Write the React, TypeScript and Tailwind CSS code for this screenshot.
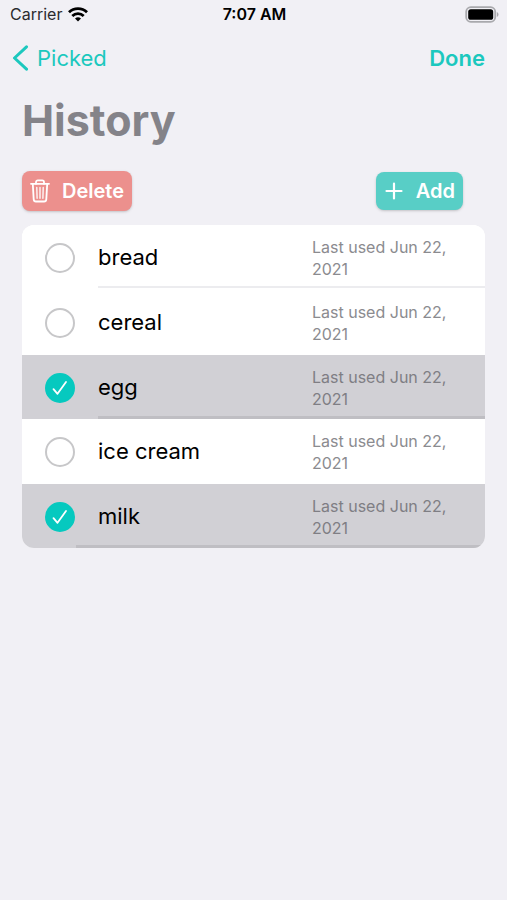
/**
 * @component App
 * @description History screen - previously used items that can be deleted or added again
 */
import React, { useState } from 'react';

const WifiIcon: React.FC = () => (
  <svg width="20" height="15" viewBox="0 0 20 15" fill="none" stroke="#000" strokeWidth="2.8" aria-hidden="true">
    <path d="M1 5.300a12.800 12.800 0 0 1 18 0" />
    <path d="M4.300 9a8.200 8.200 0 0 1 11.400 0" />
    <path d="M10 14.600l-3-3a4.300 4.300 0 0 1 6 0z" fill="#000" stroke="none" />
  </svg>
);

const BatteryIcon: React.FC = () => (
  <svg width="34" height="17" viewBox="0 0 34 17" aria-hidden="true">
    <rect x="1.2" y="1.2" width="29" height="14.6" rx="4.6" fill="none" stroke="#a9a9ad" strokeWidth="1.8" />
    <rect x="3.2" y="3.2" width="25" height="10.6" rx="2.6" fill="#000" />
    <path d="M31.800 6v5c1-.4 1.700-1.400 1.700-2.500S32.800 6.400 31.800 6z" fill="#a9a9ad" />
  </svg>
);

const TrashIcon: React.FC = () => (
  <svg width="20" height="24" viewBox="0 0 20 24" fill="none" stroke="#fff" strokeLinecap="round" strokeLinejoin="round" aria-hidden="true">
    <path d="M1 4.800h18" strokeWidth="1.800" />
    <path d="M6 4.800V3.200C6 2.100 6.800 1.400 7.800 1.400h4.400c1 0 1.800.7 1.800 1.800v1.600" strokeWidth="1.800" />
    <path d="M2.800 5l.9 15.400c.1 1.300.9 2.100 2.200 2.100h8.200c1.300 0 2.100-.8 2.200-2.100L17.200 5" strokeWidth="1.800" />
    <path d="M6.800 8.500l.3 10.800M10 8.500v10.800M13.200 8.500l-.3 10.800" strokeWidth="1.300" />
  </svg>
);

const App: React.FC = () => {
  const [items, setItems] = useState([
    { id: 1, name: 'bread', lastUsed: 'Jun 22, 2021', picked: false },
    { id: 2, name: 'cereal', lastUsed: 'Jun 22, 2021', picked: false },
    { id: 3, name: 'egg', lastUsed: 'Jun 22, 2021', picked: true },
    { id: 4, name: 'ice cream', lastUsed: 'Jun 22, 2021', picked: false },
    { id: 5, name: 'milk', lastUsed: 'Jun 22, 2021', picked: true },
  ]);

  const toggle = (id: number) =>
    setItems(items.map((item) => (item.id === id ? { ...item, picked: !item.picked } : item)));

  // The separator is hidden when the row below is highlighted
  const lineClass = (index: number) => {
    if (items[index].picked) return 'h-[3px] bg-[#bfbec3]';
    return items[index + 1]?.picked ? 'h-[2px] bg-transparent' : 'h-[2px] bg-[#ececef]';
  };

  return (
    <div className="min-h-screen bg-[#f1f0f5] font-['Inter','Liberation_Sans',sans-serif] text-black">
      {/* Status Bar */}
      <div className="grid grid-cols-3 items-center h-8 pl-[10px] pr-2 pb-1 text-base">
        <div className="flex items-center gap-[6px] text-[#2b2b2e]">
          Carrier
          <WifiIcon />
        </div>
        <div className="text-center font-semibold">7:07 AM</div>
        <div className="flex justify-end">
          <BatteryIcon />
        </div>
      </div>

      {/* Navigation */}
      <nav className="flex items-center justify-between h-[52px] pl-3 pr-[22px] text-[22px] text-[#1cc8be]">
        <a href="#picked" className="flex items-center gap-2">
          <svg width="17" height="26" viewBox="0 0 17 26" fill="none" stroke="currentColor" strokeWidth="3" strokeLinecap="round" strokeLinejoin="round" aria-hidden="true">
            <path d="M14.500 1.800L2.500 13l12 11.200" />
          </svg>
          Picked
        </a>
        <button className="font-semibold">Done</button>
      </nav>

      <main className="px-[22px]">
        <h1 className="pt-2 text-[43px] leading-14 font-bold text-[#848389]">History</h1>

        {/* Actions */}
        <div className="flex items-center justify-between pt-[23px] pr-[22px] text-xl font-semibold text-white">
          <button className="flex items-center gap-3 h-10 px-2 rounded-lg bg-[#ec908d] shadow-sm shadow-black/15">
            <TrashIcon />
            Delete
          </button>
          <button className="flex items-center gap-3 h-[38px] px-2 rounded-lg bg-[#58cec6] shadow-sm shadow-black/15">
            <svg width="20" height="20" viewBox="0 0 20 20" stroke="#fff" strokeWidth="2.200" strokeLinecap="round" aria-hidden="true">
              <path d="M10 2.500v15M2.500 10h15" />
            </svg>
            Add
          </button>
        </div>

        {/* Item List */}
        <ul className="mt-[14px] rounded-xl overflow-hidden bg-white">
          {items.map((item, index) => (
            <li key={item.id} className={item.picked ? 'bg-[#d1d0d5]' : 'bg-white pb-[2px]'}>
              <label className="grid grid-cols-[76px_1fr_173px] items-center min-h-[61px] pt-1">
                <span className="grid place-items-center w-[30px] ml-[23px]">
                  <input
                    type="checkbox"
                    checked={item.picked}
                    onChange={() => toggle(item.id)}
                    className="appearance-none col-start-1 row-start-1 size-[30px] rounded-full border-2 border-[#c7c7c9] checked:border-[#06c9bf] checked:bg-[#06c9bf]"
                  />
                  {item.picked && (
                    <svg className="col-start-1 row-start-1 pointer-events-none" width="16" height="16" viewBox="0 0 16 16" fill="none" stroke="#fff" strokeWidth="1.800" strokeLinecap="round" strokeLinejoin="round" aria-hidden="true">
                      <path d="M1.500 9.200l4 4.600L14 2" />
                    </svg>
                  )}
                </span>
                <span className="text-[22px]">{item.name}</span>
                <span className={`pr-6 text-base leading-[22px] ${item.picked ? 'text-[#7f7e84]' : 'text-[#8b8b8f]'}`}>
                  {`Last used ${item.lastUsed}`}
                </span>
              </label>
              <div className={`${index === items.length - 1 ? 'ml-[54px]' : 'ml-[76px]'} ${lineClass(index)}`} />
            </li>
          ))}
        </ul>
      </main>
    </div>
  );
};

export default App;
